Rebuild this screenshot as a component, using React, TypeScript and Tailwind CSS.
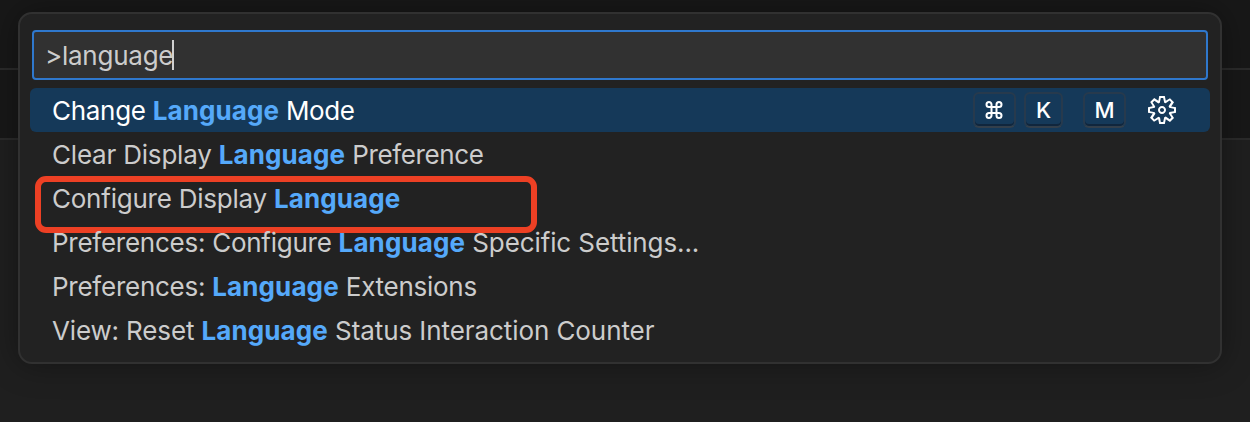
import { useState } from "react";

interface Command {
  id: string;
  before: string;
  after: string;
  beforeClass: string;
  afterClass: string;
}

const COMMANDS: Command[] = [
  { id: "mode",       before: "Change ",                 after: " Mode",                       beforeClass: "tracking-[-0.3px]",  afterClass: "tracking-[-0.4px]" },
  { id: "clear",      before: "Clear Display ",          after: " Preference",                 beforeClass: "tracking-[-0.2px]",  afterClass: "tracking-[-0.35px]" },
  { id: "configure",  before: "Configure Display ",      after: "",                            beforeClass: "tracking-[-0.23px]", afterClass: "" },
  { id: "specific",   before: "Preferences: Configure ", after: " Specific Settings...",       beforeClass: "tracking-[-0.26px]", afterClass: "tracking-[-0.1px]" },
  { id: "extensions", before: "Preferences: ",           after: " Extensions",                 beforeClass: "tracking-[-0.25px]", afterClass: "tracking-[-0.27px]" },
  { id: "counter",    before: "View: Reset ",            after: " Status Interaction Counter", beforeClass: "tracking-[-0.15px]", afterClass: "tracking-[-0.08px]" },
];

function Key({ label, className }: { label: string; className: string }) {
  return (
    <kbd
      className={`flex h-9 items-center justify-center rounded-md border-2 border-b-[#333f4b] border-x-[#273a4d] border-t-[#273a4d] font-[Inter,sans-serif] text-[22px] font-medium text-white shadow-[inset_0_-2px_0_#10263d] ${className}`}
    >
      {label}
    </kbd>
  );
}

function CommandKey() {
  return (
    <kbd
      aria-label="Command"
      className="flex h-9 w-[43px] items-center justify-center rounded-md border-2 border-b-[#333f4b] border-x-[#273a4d] border-t-[#273a4d] pr-0.5 shadow-[inset_0_-2px_0_#10263d]"
    >
      <svg width="18" height="18" viewBox="0 0 18 18" fill="none" stroke="white" strokeWidth="2">
        <path d="M6 6H4a2.5 2.5 0 1 1 2.5-2.5v11A2.5 2.5 0 1 1 4 12h10a2.5 2.5 0 1 1-2.5 2.5v-11A2.5 2.5 0 1 1 14 6H6" />
      </svg>
    </kbd>
  );
}

function GearIcon({ className }: { className: string }) {
  return (
    <svg className={className} viewBox="0 0 16 16" fill="currentColor" fillRule="evenodd" clipRule="evenodd">
      <path d="M9.1 4.4L8.6 2H7.4l-.5 2.4-.7.3-2-1.3-.9.8 1.3 2-.2.7-2.4.5v1.2l2.4.5.3.8-1.3 2 .8.8 2-1.3.8.3.4 2.3h1.2l.5-2.4.8-.3 2 1.3.8-.8-1.3-2 .3-.8 2.3-.4V7.4l-2.4-.5-.3-.8 1.3-2-.8-.8-2 1.3-.7-.2zM9.4 1l.5 2.4L12 2.1l2 2-1.4 2.1 2.4.4v2.8l-2.4.5L14 12l-2 2-2.1-1.4-.5 2.4H6.6l-.5-2.4L4 13.9l-2-2 1.4-2.1L1 9.4V6.6l2.4-.5L2.1 4l2-2 2.1 1.4.4-2.4h2.8zm.6 7c0 1.1-.9 2-2 2s-2-.9-2-2 .9-2 2-2 2 .9 2 2zM8 9c.6 0 1-.4 1-1s-.4-1-1-1-1 .4-1 1 .4 1 1 1z" />
    </svg>
  );
}

export default function App() {
  const [active, setActive] = useState("mode");

  return (
    <div className="relative h-[422px] w-[1250px] overflow-hidden bg-[#1f1f1f] font-[Inter,sans-serif]">
      <div className="h-[70px] border-b-2 border-[#2b2b2b] bg-[#181818]" />
      <div className="h-[70px] border-b-2 border-[#2b2b2b] bg-[#181818]" />

      <div className="absolute top-3 left-[18px] h-[352px] w-[1204px] rounded-[14px] border-2 border-[#313131] bg-[#222222] px-2.5 pt-4 shadow-[0_0_32px_rgba(0,0,0,0.36)]">
        <div className="mx-0.5 flex h-[50px] items-center rounded-[4px] border-2 border-[#2f78cd] bg-[#313131] pl-[11px] text-[26px] text-[#cccccc]">
          <span className="pt-px tracking-[-0.25px]">&gt;language</span>
          <span className="-ml-px h-[30px] w-0.5 bg-[#d0d0d0]" />
        </div>

        <ul className="mt-2">
          {COMMANDS.map(c => (
            <li
              key={c.id}
              onClick={() => setActive(c.id)}
              className={`relative flex h-11 items-center rounded-md pl-[22px] text-[26px] whitespace-pre ${
                c.id === active ? "bg-[#153959] text-white" : "text-[#cccccc]"
              }`}
            >
              <div className="flex pt-px">
                <span className={c.beforeClass}>{c.before}</span>
                <span className="font-bold tracking-[0.1px] text-[#55a9fa]">Language</span>
                <span className={c.afterClass}>{c.after}</span>
              </div>

              {c.id === "mode" && (
                <div className="mr-8 ml-auto flex items-center">
                  <CommandKey />
                  <Key label="K" className="ml-2 w-[39px]" />
                  <Key label="M" className="ml-5 w-[43px]" />
                  <GearIcon className="ml-5 size-8" />
                </div>
              )}

              {c.id === "configure" && (
                <div className="absolute top-0 left-[5px] h-[57px] w-[502px] rounded-[11px] border-6 border-[#ed4024]" />
              )}
            </li>
          ))}
        </ul>
      </div>
    </div>
  );
}
